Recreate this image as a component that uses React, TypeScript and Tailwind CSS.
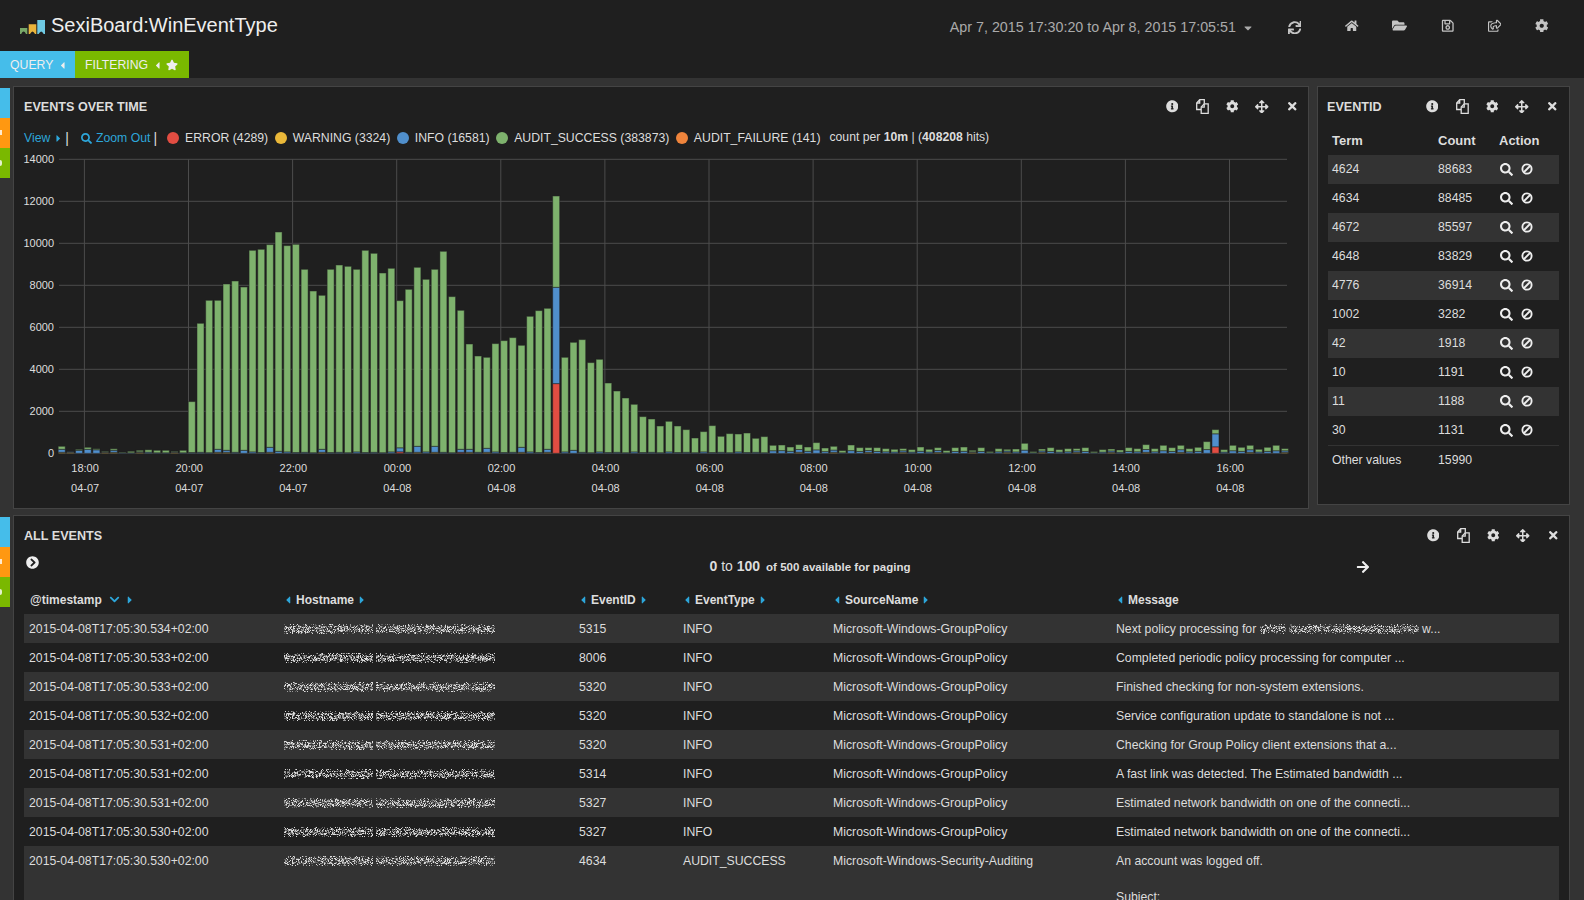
import React from "react";
import {
  FaInfoCircle, FaCog, FaArrowsAlt, FaTimes, FaSearch, FaSync, FaHome, FaFolderOpen,
  FaRegSave, FaRegShareSquare, FaCaretDown, FaCaretLeft, FaCaretRight, FaStar, FaChevronDown,
  FaChevronCircleRight, FaArrowRight,
} from "react-icons/fa";

const totals = [
  7,1,4,6,4.5,2,4.5,1,2,3,3.5,3,3,2,3,
  51.7,130,153,153,169.3,172.3,166.3,203,204,208.7,221.3,207.7,209,184,162.3,158,184,188.3,187,184,203,200,180.3,185,152.7,164,186,174,184,202,156.7,143,109.3,97.3,96,109.7,112.7,115.7,108,137,142.7,145,257.3,96,111,113.7,90.7,94,70.3,62.3,55.3,49,36.7,34.3,27.3,32,27.3,23.7,15.3,21.7,27.7,17,19.7,19.3,20.3,15,16.7,8,
  8.3,6.3,8.7,6.3,10.7,5.3,7,2.7,8.3,5.7,5.7,5.7,4.7,4,4.7,3.7,6.3,4,5.7,2.7,5.7,6.3,3,5.7,1.7,4.7,4,4.3,10,1.7,4.3,5.7,3.7,4.7,4.7,5.7,1.7,3.7,4.3,3.3,
  5.7,4.7,8.7,4.7,8,5.7,8,4.7,6,11.7,23.7,3.7,8,6,8,4,6,8,4.7,
];

const overrides: Record<number, { r?: number; y?: number; b: number }> = {
  0: { y: 1, b: 3 }, 2: { b: 3 }, 3: { b: 4 }, 4: { b: 3.5 }, 6: { y: 1, b: 2 },
  18: { y: 1, b: 3 }, 19: { y: 1, b: 2 }, 21: { b: 3 }, 24: { y: 1, b: 5 }, 25: { b: 2 }, 30: { y: 1, b: 3 },
  39: { r: 1.5, b: 4 }, 41: { y: 1, b: 6 }, 43: { y: 1, b: 6 }, 46: { r: 1, b: 3 }, 47: { y: 1, b: 3 },
  49: { y: 1, b: 4 }, 53: { y: 1, b: 5 }, 56: { y: 1, b: 3 }, 57: { r: 69.7, b: 96.3 }, 59: { b: 3 },
  133: { r: 6.5, b: 13 },
};

function Chart() {
  const base = 453.3;
  const vLines = Array.from({ length: 12 }, (_, k) => 84.4 + 104.1 * k);
  const hours = ["18:00","20:00","22:00","00:00","02:00","04:00","06:00","08:00","10:00","12:00","14:00","16:00"];
  const dates = ["04-07","04-07","04-07","04-08","04-08","04-08","04-08","04-08","04-08","04-08","04-08","04-08"];
  const ticks = [0, 2000, 4000, 6000, 8000, 10000, 12000, 14000];
  return (
    <svg width="1294" height="352" className="block" fill="#dddddd" fontSize="11">
      <g transform="translate(-14,-150)">
        {ticks.map((t, i) => (
          <g key={t}>
            <line x1="59" x2="1287" y1={base - i * 42} y2={base - i * 42} stroke="#4c4c4c" />
            <text x="54" y={base - i * 42 + 4} textAnchor="end">{t}</text>
          </g>
        ))}
        {vLines.map((x, i) => (
          <g key={x}>
            <line x1={x} x2={x} y1="159.3" y2={base} stroke="#4c4c4c" />
            <text x={x + 0.7} y="472" textAnchor="middle">{hours[i]}</text>
            <text x={x + 0.7} y="492" textAnchor="middle">{dates[i]}</text>
          </g>
        ))}
        {totals.map((t, i) => {
          const x = 61.7 + i * 8.675;
          const o = overrides[i];
          const small = t < 12;
          const dflt = small
            ? { r: 0, y: i % 4 === 1 ? 1 : 0, b: t > 3 ? t * 0.32 : 0.5 }
            : { r: 0, y: 0, b: [1, 0.6, 1.4, 0.8][i % 4] };
          const r = o?.r ?? dflt.r ?? 0;
          const y = o?.y ?? (o ? 0 : dflt.y);
          const b = o?.b ?? dflt.b;
          const g = Math.max(t - r - y - b, 0);
          const segs = [[r, "#e24d42"], [y, "#eab839"], [b, "#508fcc"], [g, "#7eb26d"]] as [number, string][];
          let top = base;
          return (
            <g key={i}>
              {segs.filter((s) => s[0] > 0).map(([h, c], j) => {
                top -= h;
                return <rect key={j} x={x - 3.5} y={top} width="7" height={h} fill={c} stroke="#1f1f1f" strokeOpacity="0.5" />;
              })}
            </g>
          );
        })}
      </g>
    </svg>
  );
}

function speck(seed: number, w: number, gaps: number[] = []) {
  let s = seed * 9301 + 49297;
  const rnd = () => {
    s = (s * 9301 + 49297) % 233280;
    return s / 233280;
  };
  const layers = ["", "", ""];
  for (let x = 0; x < w; x++) {
    if (gaps.some((g) => Math.abs(g - x) < 2)) continue;
    for (let y = 1; y < 11; y++) {
      const edge = y < 3 || y > 8 ? 0.25 : 0.65;
      if (rnd() < edge) {
        layers[Math.floor(rnd() * 3)] += `M${x} ${y}h1v1h-1z`;
      }
    }
  }
  return layers;
}

function Noise({ seed, w, gaps }: { seed: number; w: number; gaps?: number[] }) {
  const l = speck(seed, w, gaps);
  return (
    <svg width={w} height="12" className="block shrink-0 blur-[0.45px]">
      <path d={l[0]} fill="#dcdcdc" />
      <path d={l[1]} fill="#9c9c9c" />
      <path d={l[2]} fill="#626262" />
    </svg>
  );
}

function CopyIcon() {
  return (
    <svg width="13" height="15" viewBox="0 0 13 15" className="block" fill="none" stroke="currentColor" strokeWidth="1.3">
      <path d="M5 10.5H.7V4L3.7.7h4.6V5" />
      <path d="M3.7.9V4H.9" />
      <path d="M5.2 14.3V8l3-3.2h4v9.5z" fill="#1f1f1f" />
      <path d="M8.2 5v3.2H5.4" />
    </svg>
  );
}

function BanIcon() {
  return (
    <svg width="12" height="12" viewBox="0 0 12 12" className="-mt-[1px] block" fill="none" stroke="currentColor" strokeWidth="1.9">
      <circle cx="6" cy="6" r="4.6" />
      <path d="M3 9l6-6" />
    </svg>
  );
}

function PanelIcons() {
  const cells = [<FaInfoCircle />, <CopyIcon />, <FaCog />, <FaArrowsAlt className="text-[13.5px]" />, <FaTimes />];
  return (
    <div className="flex items-center text-[12.5px] text-[#dddddd]">
      {cells.map((I, i) => (
        <span key={i} className="flex w-[30px] justify-center">
          {I}
        </span>
      ))}
    </div>
  );
}

function Legend({ color, children }: { color: string; children: React.ReactNode }) {
  return (
    <span className="flex items-center gap-[6px]">
      <i className="-mt-[1px] block h-[12px] w-[12px] rounded-full" style={{ background: color }} />
      <span>{children}</span>
    </span>
  );
}

function Strips() {
  return (
    <div className="mt-[2px] flex w-[10px] shrink-0 flex-col">
      <div className="h-[30px] bg-[#45bdea]" />
      <div className="relative h-[30px] overflow-hidden bg-[#ff9811]">
        <i className="absolute left-0 top-[12px] block h-[5px] w-[2px] bg-white/80" />
      </div>
      <div className="relative h-[30px] overflow-hidden bg-[#7ab800]">
        <i className="absolute left-0 top-[12px] block h-[6px] w-[2px] rounded-r bg-white/80" />
      </div>
    </div>
  );
}

const terms = [
  ["4624", "88683"], ["4634", "88485"], ["4672", "85597"], ["4648", "83829"], ["4776", "36914"],
  ["1002", "3282"], ["42", "1918"], ["10", "1191"], ["11", "1188"], ["30", "1131"],
];

const GP = "Microsoft-Windows-GroupPolicy";
const rows: [string, string, string, string, React.ReactNode][] = [
  ["2015-04-08T17:05:30.534+02:00", "5315", "INFO", GP, ""],
  ["2015-04-08T17:05:30.533+02:00", "8006", "INFO", GP, "Completed periodic policy processing for computer ..."],
  ["2015-04-08T17:05:30.533+02:00", "5320", "INFO", GP, "Finished checking for non-system extensions."],
  ["2015-04-08T17:05:30.532+02:00", "5320", "INFO", GP, "Service configuration update to standalone is not ..."],
  ["2015-04-08T17:05:30.531+02:00", "5320", "INFO", GP, "Checking for Group Policy client extensions that a..."],
  ["2015-04-08T17:05:30.531+02:00", "5314", "INFO", GP, "A fast link was detected. The Estimated bandwidth ..."],
  ["2015-04-08T17:05:30.531+02:00", "5327", "INFO", GP, "Estimated network bandwidth on one of the connecti..."],
  ["2015-04-08T17:05:30.530+02:00", "5327", "INFO", GP, "Estimated network bandwidth on one of the connecti..."],
];

const cols = "grid grid-cols-[255px_295px_104px_150px_283px_1fr]";
const termCols = "grid grid-cols-[106px_61px_1fr]";

function Head({ label, left = true, right = true, sort = false }: { label: string; left?: boolean; right?: boolean; sort?: boolean }) {
  return (
    <div className="flex items-center gap-[1px] text-[12px]">
      {left && <FaCaretLeft className="-ml-[2px] text-[12px] text-[#2da6da]" />}
      <span className="ml-[1px] font-bold">{label}</span>
      {sort && <FaChevronDown className="ml-[6px] text-[11px] text-[#2da6da]" />}
      {right && <FaCaretRight className={`text-[12px] text-[#2da6da] ${sort ? "ml-[3px]" : "ml-[1px]"}`} />}
    </div>
  );
}

function Logo() {
  return (
    <svg width="26" height="15" viewBox="0 0 26 15" className="block shrink-0">
      <path d="M0 8h7.3v6h-1.3q-1.2-2.4-2.4-2.4t-2.4 2.4h-1.2z" fill="#78a868" />
      <path d="M8.7 4.3h7.6v9.7h-1.3q-1.3-2.6-2.5-2.6t-2.5 2.6h-1.3z" fill="#e9b43c" />
      <path d="M17.3 0h7.7v14h-1.3q-1.3-2.6-2.5-2.6t-2.6 2.6h-1.3z" fill="#6fc9e2" />
    </svg>
  );
}

export default function App() {
  return (
    <div className="h-[900px] w-[1584px] overflow-hidden bg-[#333333] font-['Liberation_Sans',Arial,sans-serif] text-[12.25px] text-[#dddddd]">
      <header className="flex h-[51px] items-center bg-[#1f1f1f] pl-[20px]">
        <div className="flex items-center gap-[5px]">
          <div className="mt-[3px]"><Logo /></div>
          <span className="mb-[2px] text-[20px] text-[#eeeeee]">SexiBoard:WinEventType</span>
        </div>
        <div className="ml-[672px] mt-[5px] flex items-center gap-[6px] text-[14.3px] text-[#aaaaaa]">
          <span>Apr 7, 2015 17:30:20 to Apr 8, 2015 17:05:51</span>
          <FaCaretDown className="text-[12px]" />
        </div>
        <div className="ml-[34px] flex items-center text-[13.5px] text-[#c4c4c4]">
          <FaSync className="mt-[4px]" />
          <div className="ml-[44px] flex items-center gap-[33.5px]">
            <FaHome />
            <FaFolderOpen className="text-[15px]" />
            <FaRegSave />
            <FaRegShareSquare />
            <FaCog />
          </div>
        </div>
      </header>

      <div className="flex h-[27px] items-stretch bg-[#1f1f1f] text-[#eeeeee]">
        <div className="flex w-[75px] items-center gap-[4px] bg-[#45bdea] pl-[10px] pt-[1px]">
          <span>QUERY</span>
          <FaCaretLeft className="text-[11px]" />
        </div>
        <div className="flex w-[114px] items-center bg-[#7ab800] pl-[10px] pt-[1px]">
          <span>FILTERING</span>
          <FaCaretLeft className="ml-[4px] text-[11px]" />
          <FaStar className="-mt-[1px] ml-[3px] text-[12px]" />
        </div>
      </div>

      <div className="mt-[8px] flex items-start">
        <Strips />
        <section className="ml-[3px] h-[423px] w-[1296px] shrink-0 border border-[#444444] bg-[#1f1f1f]">
          <div className="flex h-[38px] items-center justify-between pl-[10px] pr-[1px] pt-[1px]">
            <h2 className="mt-[1px] text-[12.6px] font-bold">EVENTS OVER TIME</h2>
            <PanelIcons />
          </div>
          <div className="flex h-[25px] items-center pl-[10px] pt-[1px]">
            <span className="text-[#2da6da]">View</span>
            <FaCaretRight className="ml-[3px] text-[11px] text-[#2da6da]" />
            <span className="ml-[1px] text-[14px] leading-none">|</span>
            <FaSearch className="ml-[12px] text-[11px] text-[#2da6da]" />
            <span className="ml-[4px] text-[#2da6da]">Zoom Out</span>
            <span className="ml-[3px] text-[14px] leading-none">|</span>
            <div className="ml-[10px] flex items-center gap-[6.5px]">
              <Legend color="#e24d42">ERROR (4289)</Legend>
              <Legend color="#eab839">WARNING (3324)</Legend>
              <Legend color="#508fcc">INFO (16581)</Legend>
              <Legend color="#7eb26d">AUDIT_SUCCESS (383873)</Legend>
              <Legend color="#ef843c">AUDIT_FAILURE (141)</Legend>
            </div>
            <span className="-mt-[1px] ml-[9px] text-[12.2px]">
              count per <b>10m</b> | (<b>408208</b> hits)
            </span>
          </div>
          <Chart />
        </section>

        <section className="ml-[8px] h-[419px] w-[253px] shrink-0 border border-[#444444] bg-[#1f1f1f]">
          <div className="flex h-[38px] items-center justify-between pl-[9px] pr-[2px] pt-[1px]">
            <h2 className="mt-[1px] text-[12.6px] font-bold">EVENTID</h2>
            <PanelIcons />
          </div>
          <div className="px-[10px]">
            <div className={`${termCols} h-[30px] items-center pl-[4px] pt-[2px] text-[13px] font-bold`}>
              <span>Term</span>
              <span>Count</span>
              <span>Action</span>
            </div>
            {terms.map(([t, c], i) => (
              <div key={t} className={`${termCols} h-[29px] items-center pl-[4px] ${i % 2 === 0 ? "bg-[#333333]" : ""}`}>
                <span>{t}</span>
                <span>{c}</span>
                <span className="flex items-center gap-[8px] pl-[1px] text-[13px] text-[#eeeeee]">
                  <FaSearch />
                  <BanIcon />
                </span>
              </div>
            ))}
            <div className={`${termCols} h-[29px] items-center border-t border-[#333333] pl-[4px]`}>
              <span>Other values</span>
              <span>15990</span>
            </div>
          </div>
        </section>
      </div>

      <div className="mt-[6px] flex items-start">
        <Strips />
        <section className="ml-[3px] h-[400px] w-[1557px] shrink-0 border border-[#444444] bg-[#1f1f1f]">
          <div className="flex h-[38px] items-center justify-between pl-[10px] pr-[1px] pt-[1px]">
            <h2 className="mt-[1px] text-[12.6px] font-bold">ALL EVENTS</h2>
            <PanelIcons />
          </div>
          <div className="relative flex h-[22px] items-center justify-center pt-[3px]">
            <FaChevronCircleRight className="absolute left-[12px] top-[2px] text-[13px] text-[#eeeeee]" />
            <span className="ml-[37px] flex items-baseline gap-[6px]">
              <span className="text-[14px]"><b>0</b> to <b>100</b></span>
              <b className="text-[11.5px]">of 500 available for paging</b>
            </span>
            <FaArrowRight className="absolute left-[1342px] top-[6px] text-[14px] text-[#eeeeee]" />
          </div>
          <div className="mx-[10px] mt-[11px]">
            <div className={`${cols} h-[27px] items-center pb-[2px] pl-[5px]`}>
              <Head label="@timestamp" left={false} sort />
              <Head label="Hostname" />
              <Head label="EventID" />
              <Head label="EventType" />
              <Head label="SourceName" />
              <Head label="Message" right={false} />
            </div>
            {rows.map(([ts, id, type, src, msg], i) => (
              <div key={i} className={`${cols} h-[29px] items-center pl-[5px] pt-[1px] ${i % 2 === 0 ? "bg-[#333333]" : ""}`}>
                <span>{ts}</span>
                <Noise seed={i + 3} w={211} gaps={[90]} />
                <span>{id}</span>
                <span>{type}</span>
                <span>{src}</span>
                {i === 0 ? (
                  <span className="flex items-center">
                    <span>Next policy processing for&nbsp;</span>
                    <Noise seed={21} w={159} gaps={[27]} />
                    <span>&nbsp;w...</span>
                  </span>
                ) : (
                  <span>{msg}</span>
                )}
              </div>
            ))}
            <div className={`${cols} bg-[#333333] pb-[20px] pl-[5px] pt-[6px] leading-[18px]`}>
              <span>2015-04-08T17:05:30.530+02:00</span>
              <div className="pt-[3px]"><Noise seed={14} w={211} gaps={[90]} /></div>
              <span>4634</span>
              <span>AUDIT_SUCCESS</span>
              <span>Microsoft-Windows-Security-Auditing</span>
              <span>
                An account was logged off.
                <br />
                <br />
                Subject:
              </span>
            </div>
          </div>
        </section>
      </div>
    </div>
  );
}
